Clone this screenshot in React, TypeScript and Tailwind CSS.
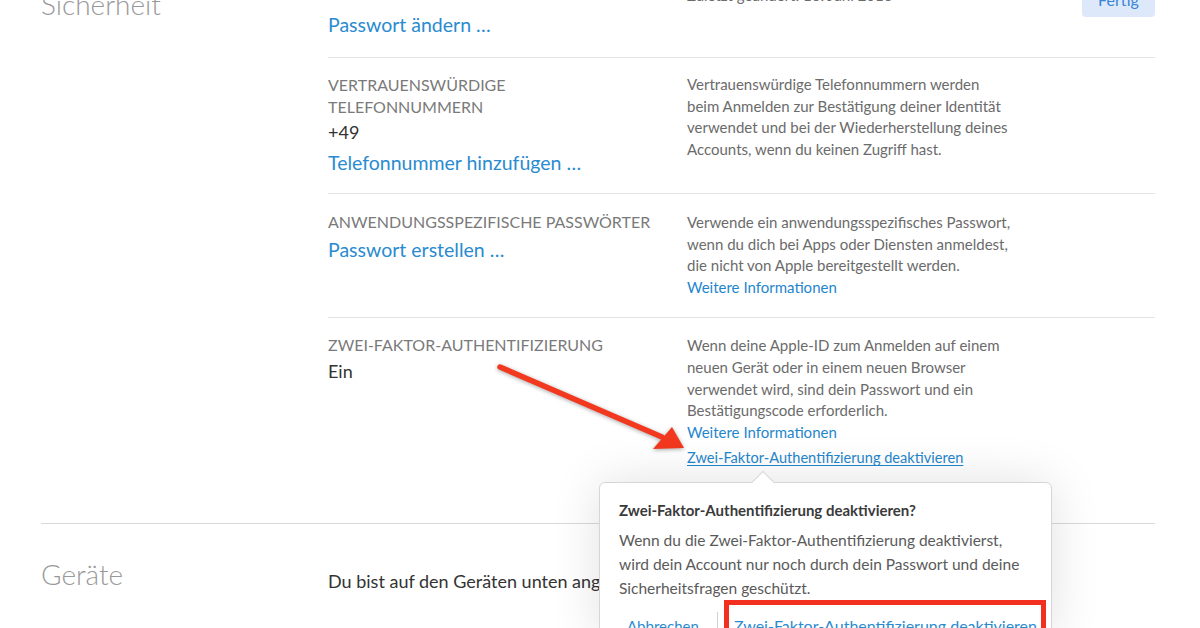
import React from "react";

const font = { fontFamily: "Lato, 'Liberation Sans', sans-serif" };

const Desc = ({ lines }: { lines: string[] }) => (
  <div className="text-[15px] leading-[21.6px] text-[#6b6b6b]">
    {lines.map((l) => (
      <div key={l}>{l}</div>
    ))}
  </div>
);

const Label = ({ children }: { children: React.ReactNode }) => (
  <div className="text-[16px] leading-[22px] uppercase text-[#7a7a7a]">{children}</div>
);

const LinkBig = ({ children }: { children: React.ReactNode }) => (
  <div className="text-[19.5px] leading-[28px] text-[#2a8bd0]">{children}</div>
);

const Row = ({
  left,
  right,
  pt = "pt-4",
  pb = "pb-4",
  last,
}: {
  left: React.ReactNode;
  right: React.ReactNode;
  pt?: string;
  pb?: string;
  last?: boolean;
}) => (
  <div
    className={`grid grid-cols-[359px_1fr] ${pt} ${pb} ${last ? "" : "border-b border-[#e3e3e3]"}`}
  >
    <div>{left}</div>
    <div>{right}</div>
  </div>
);

export default function App() {
  return (
    <div className="relative w-[1200px] h-[628px] overflow-hidden bg-white" style={font}>
      <div className="-mt-[33px] pl-[41px] pr-[45px]">
        {/* Sicherheit */}
        <div className="flex border-b border-[#d9d9d9]">
          <div className="w-[287px] pt-[17px] text-[28px] leading-[40px] font-light text-[#999]">
            Sicherheit
          </div>
          <div className="flex-1">
            <Row
              pt="pt-4"
              pb="pb-[18px]"
              left={
                <>
                  <Label>Passwort</Label>
                  <div className="mt-[6px]">
                    <LinkBig>Passwort ändern …</LinkBig>
                  </div>
                </>
              }
              right={
                <div className="flex justify-between items-start">
                  <div className="text-[15px] leading-[21.6px] text-[#6b6b6b] pt-[2px]">
                    Zuletzt geändert: 16. Juni 2016
                  </div>
                  <div className="w-[73px] h-[34px] rounded-[4px] bg-[#dde9fb] flex items-center justify-center text-[16px] text-[#3a84d6]">
                    Fertig
                  </div>
                </div>
              }
            />
            <Row
              pt="pt-4"
              pb="pb-4"
              left={
                <>
                  <Label>
                    Vertrauenswürdige
                    <br />
                    Telefonnummern
                  </Label>
                  <div className="text-[18px] leading-[26px] text-[#333] mt-[1px]">+49</div>
                  <div className="mt-[4px]">
                    <LinkBig>Telefonnummer hinzufügen …</LinkBig>
                  </div>
                </>
              }
              right={
                <div>
                  <Desc
                    lines={[
                      "Vertrauenswürdige Telefonnummern werden",
                      "beim Anmelden zur Bestätigung deiner Identität",
                      "verwendet und bei der Wiederherstellung deines",
                      "Accounts, wenn du keinen Zugriff hast.",
                    ]}
                  />
                </div>
              }
            />
            <Row
              pt="pt-[17px]"
              pb="pb-[19px]"
              left={
                <>
                  <Label>Anwendungsspezifische Passwörter</Label>
                  <div className="mt-[3px]">
                    <LinkBig>Passwort erstellen …</LinkBig>
                  </div>
                </>
              }
              right={
                <div className="pt-[1px]">
                  <Desc
                    lines={[
                      "Verwende ein anwendungsspezifisches Passwort,",
                      "wenn du dich bei Apps oder Diensten anmeldest,",
                      "die nicht von Apple bereitgestellt werden.",
                    ]}
                  />
                  <div className="text-[15px] leading-[21.6px] text-[#1f86cc]">
                    Weitere Informationen
                  </div>
                </div>
              }
            />
            <Row
              pt="pt-[16px]"
              pb="pb-[54px]"
              last
              left={
                <>
                  <Label>Zwei-Faktor-Authentifizierung</Label>
                  <div className="text-[18px] leading-[26px] text-[#333] mt-[2px]">Ein</div>
                </>
              }
              right={
                <div className="pt-[1px]">
                  <Desc
                    lines={[
                      "Wenn deine Apple-ID zum Anmelden auf einem",
                      "neuen Gerät oder in einem neuen Browser",
                      "verwendet wird, sind dein Passwort und ein",
                      "Bestätigungscode erforderlich.",
                    ]}
                  />
                  <div className="text-[15px] leading-[21.6px] text-[#1f86cc]">
                    Weitere Informationen
                  </div>
                  <div className="mt-[4px] text-[14.6px] leading-[21.6px] text-[#1f86cc] underline underline-offset-2">
                    Zwei-Faktor-Authentifizierung deaktivieren
                  </div>
                </div>
              }
            />
          </div>
        </div>

        {/* Geräte */}
        <div className="flex pt-[30px]">
          <div className="w-[287px] text-[28px] leading-[40px] font-light text-[#999]">Geräte</div>
          <div className="pt-[14px] text-[18px] leading-[26px] text-[#333]">
            Du bist auf den Geräten unten angemeldet.
          </div>
        </div>
      </div>

      {/* Arrow annotation */}
      <svg
        className="absolute left-[490px] top-[355px] drop-shadow-[0_1px_2px_rgba(0,0,0,0.35)]"
        width="210"
        height="105"
        viewBox="0 0 210 105"
      >
        <line x1="10" y1="12" x2="172" y2="82" stroke="#f2381f" strokeWidth="5.5" strokeLinecap="round" />
        <polygon points="194,93 163,94 182,72" fill="#f2381f" />
      </svg>

      {/* Popover */}
      <div className="absolute left-[599px] top-[482px] w-[453px] rounded-[6px] border border-[#d6d6d6] bg-white shadow-[0_0_50px_rgba(0,0,0,0.12)]">
        <div className="absolute -top-[9px] left-[155px] w-[16px] h-[16px] rotate-45 bg-white border-l border-t border-[#d6d6d6]" />
        <div className="relative px-[19px] pt-[15px]">
          <div className="text-[15px] leading-[24px] font-bold text-[#3a3a3a]">
            Zwei-Faktor-Authentifizierung deaktivieren?
          </div>
          <div className="mt-[6px] text-[15.5px] leading-[24px] text-[#5a5a5a] whitespace-nowrap">
            Wenn du die Zwei-Faktor-Authentifizierung deaktivierst,
            <br />
            wird dein Account nur noch durch dein Passwort und deine
            <br />
            Sicherheitsfragen geschützt.
          </div>
          <div className="flex items-start">
            <div className="shrink-0 pl-[8px] pt-[14px] text-[15px] leading-[24px] text-[#2a8bd0] w-[98px]">
              Abbrechen
            </div>
            <div className="shrink-0 mt-[12px] w-px h-[24px] bg-[#d0d0d0]" />
            <div className="shrink-0 ml-[6px] w-[322px] h-[40px] border-[5px] border-b-0 border-[#f2301f] pt-[9px] pl-[5px] text-[16px] leading-[24px] text-[#2a8bd0] whitespace-nowrap">
              Zwei-Faktor-Authentifizierung deaktivieren
            </div>
          </div>
        </div>
      </div>
    </div>
  );
}
